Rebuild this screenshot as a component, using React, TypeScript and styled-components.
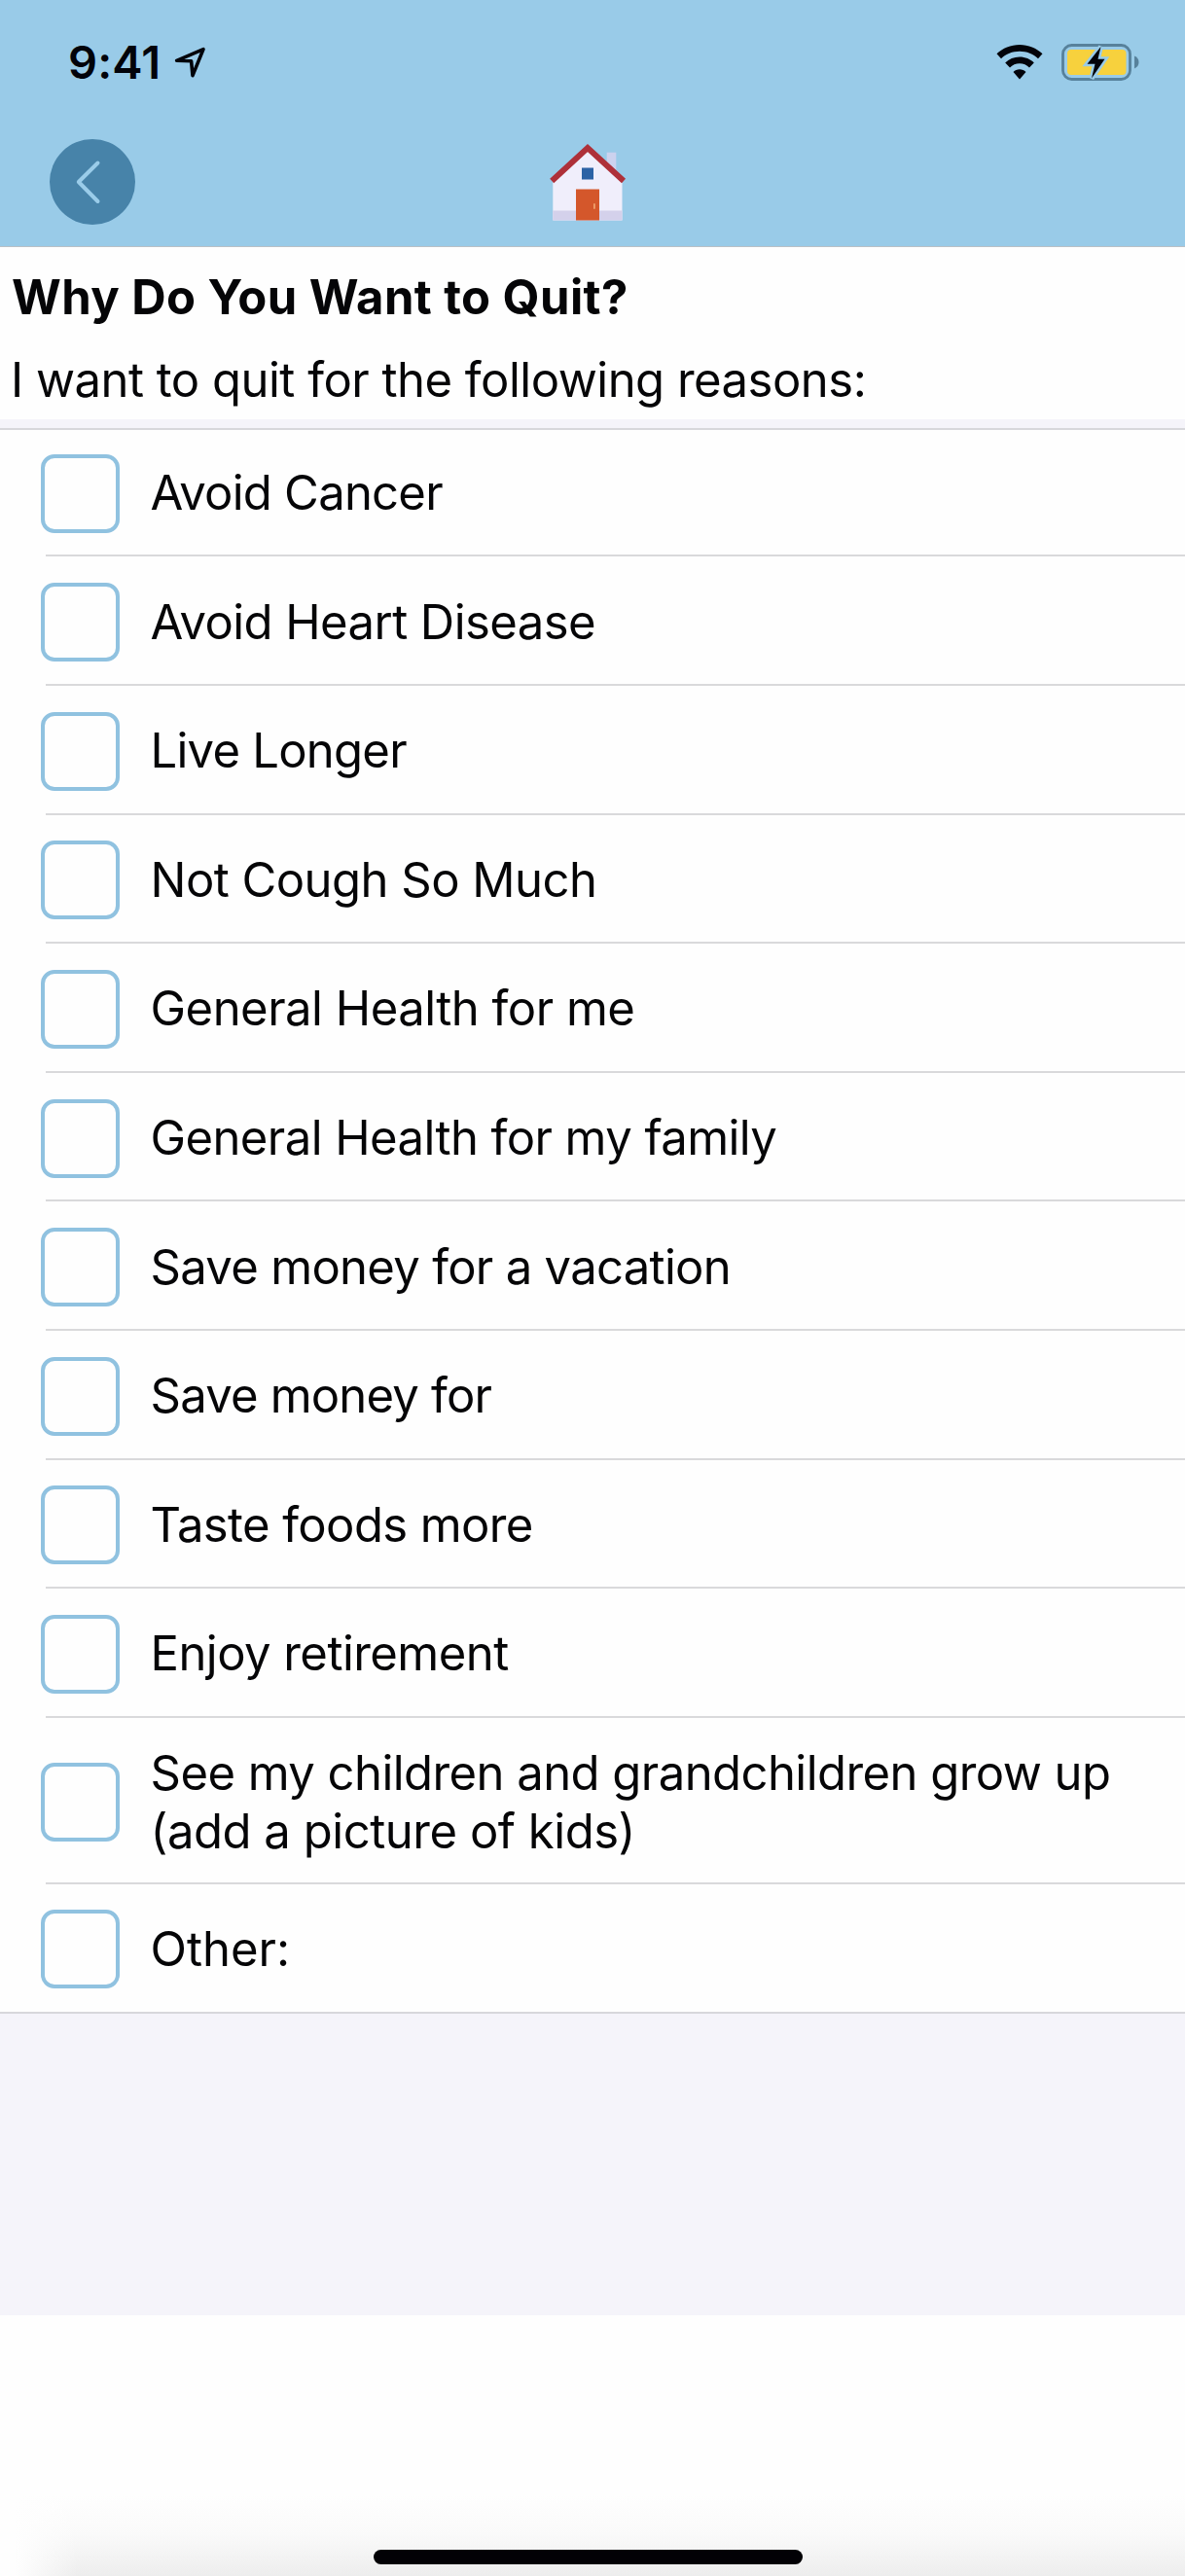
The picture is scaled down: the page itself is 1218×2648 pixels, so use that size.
import React, { useState } from "react";
import styled, { createGlobalStyle } from "styled-components";

const Global = createGlobalStyle`
  *, *::before, *::after { box-sizing: border-box; }
  html, body { margin: 0; padding: 0; background: #fefefe; }
  body { font-family: Inter, "Liberation Sans", sans-serif; color: #050507; }
`;

const Screen = styled.div`
  display: flex;
  flex-direction: column;
  width: 1218px;
  height: 2648px;
  background: #fefefe;
  overflow: hidden;
`;

const Header = styled.header`
  height: 254px;
  flex: none;
  background: #99cbe8;
  border-bottom: 1px solid #b9c0c6;
`;

const StatusBar = styled.div`
  display: flex;
  align-items: center;
  justify-content: space-between;
  height: 127px;
  padding: 0 47px 0 70px;
`;

const StatusGroup = styled.div<{ $gap: number }>`
  display: flex;
  align-items: center;
  gap: ${(p) => p.$gap}px;
`;

const Clock = styled.span`
  font-size: 47px;
  line-height: 56px;
  font-weight: 600;
  letter-spacing: 0.1px;
  color: #02030a;
`;

const NavBar = styled.nav`
  display: grid;
  grid-template-columns: 1fr auto 1fr;
  align-items: center;
  height: 120px;
  padding: 0 59px 0 51px;
`;

const BackButton = styled.button`
  display: flex;
  width: 88px;
  height: 88px;
  padding: 0;
  border: 0;
  border-radius: 50%;
  background: #4783a9;
`;

const HomeButton = styled.button`
  display: flex;
  padding: 0;
  border: 0;
  background: none;
`;

const Intro = styled.section`
  flex: none;
  height: 177px;
  padding: 22px 13px 0 12px;
`;

const Title = styled.h1`
  margin: 0;
  font-size: 49px;
  line-height: 60px;
  font-weight: 700;
  letter-spacing: 0.4px;
  white-space: nowrap;
`;

const Subtitle = styled.p`
  margin: 25px 0 0 -1px;
  font-size: 49px;
  line-height: 60px;
  letter-spacing: -0.5px;
  white-space: nowrap;
`;

const ListArea = styled.main`
  flex: none;
  height: 1949px;
  padding-top: 9px;
  background: #f5f4fa;
`;

const List = styled.ul`
  margin: 0;
  padding: 0;
  list-style: none;
  background: #fefefe;
  border-top: 2px solid #d7d7db;
  border-bottom: 2px solid #d7d7db;
`;

const Row = styled.li<{ $tall?: boolean }>`
  display: flex;
  align-items: center;
  height: ${(p) => (p.$tall ? 171.6 : 132.6)}px;
  padding: 2px 0 0 42px;

  &:first-child { height: 130.4px; padding-top: 0; }
  &:last-child { height: 131px; }
`;

const Divider = styled.li`
  height: 2px;
  margin: -2px 0 0 47px;
  background: #d9d9db;
`;

const Label = styled.label`
  display: flex;
  align-items: center;
  gap: 31.5px;
`;

const Box = styled.input`
  appearance: none;
  flex: none;
  width: 81px;
  height: 81px;
  margin: 0;
  border: 4px solid #90c2e0;
  border-radius: 14px;
  background: #fefefe;

  &:checked { background: #90c2e0; }
`;

const Reason = styled.span`
  display: flex;
  flex-direction: column;
`;

const Line = styled.span<{ $track: number }>`
  font-size: 49px;
  line-height: 60px;
  letter-spacing: ${(p) => p.$track}px;
  white-space: nowrap;
`;

const Footer = styled.footer`
  flex: 1;
  display: flex;
  align-items: flex-end;
  justify-content: center;
  padding: 0 10px 12px 0;
  background:
    linear-gradient(to right, #fefefe 0, #fefefe 15px, rgba(254, 254, 254, 0) 80px),
    linear-gradient(to bottom, #fefefe 0, #fefefe 185px, #fafafa 225px, #ededed 268px);
`;

const HomeIndicator = styled.div`
  width: 441px;
  height: 15px;
  border-radius: 8px;
  background: #020105;
`;

type Item = { lines: [text: string, track: number][] };

const reasons: Item[] = [
  { lines: [["Avoid Cancer", -0.75]] },
  { lines: [["Avoid Heart Disease", -0.56]] },
  { lines: [["Live Longer", -0.75]] },
  { lines: [["Not Cough So Much", -0.53]] },
  { lines: [["General Health for me", -0.5]] },
  { lines: [["General Health for my family", -0.57]] },
  { lines: [["Save money for a vacation", -0.7]] },
  { lines: [["Save money for", -0.8]] },
  { lines: [["Taste foods more", -0.6]] },
  { lines: [["Enjoy retirement", -0.54]] },
  {
    lines: [
      ["See my children and grandchildren grow up", -0.55],
      ["(add a picture of kids)", -0.46],
    ],
  },
  { lines: [["Other:", 0]] },
];

const LocationIcon = () => (
  <svg width="34" height="34" viewBox="0 0 34 34" fill="none">
    <path d="M2.600 15.300 L30 3.600 L19 30.600 L17.600 15.800 Z" stroke="#02030a" strokeWidth="3.600" strokeLinejoin="round" />
  </svg>
);

const WifiIcon = () => (
  <svg width="48" height="36" viewBox="0 0 48 36" fill="#02030a">
    <path d="M24 0C14.900 0 6.600 3.500 .5 9.300L5 14.200C10 9.500 16.600 6.800 24 6.800S38 9.500 43 14.200L47.500 9.300C41.400 3.500 33.100 0 24 0Z" />
    <path d="M24 12.600C18.300 12.600 13 14.800 9.200 18.500L14 23.400C16.600 20.900 20.100 19.300 24 19.300S31.400 20.900 34 23.400L38.800 18.500C35 14.800 29.700 12.600 24 12.600Z" />
    <path d="M24 25.200C21.500 25.200 19.200 26.200 17.500 27.900L24 35.500L30.500 27.900C28.800 26.200 26.500 25.200 24 25.200Z" />
  </svg>
);

const BatteryIcon = () => (
  <svg width="80" height="38" viewBox="0 0 80 38">
    <rect x="1.500" y="1.500" width="69" height="35" rx="9" fill="none" stroke="#57819b" strokeWidth="2.800" />
    <rect x="6" y="6" width="60.500" height="26" rx="4" fill="#f7d13d" />
    <path d="M79.500 19c0 3-1.600 5.300-4.500 6.400V12.600c2.900 1.100 4.500 3.400 4.500 6.400Z" fill="#57819b" />
    <path d="M40.500 3 L26.500 20.800 H34.500 L31 35.500 L44.500 15.800 H37.500 Z" fill="#02030a" stroke="#99cbe8" strokeWidth="5" paintOrder="stroke" />
  </svg>
);

const ChevronIcon = () => (
  <svg width="88" height="88" viewBox="0 0 88 88" fill="none">
    <path d="M49.500 24.500 L29.800 44 L49.500 64" stroke="#9acce9" strokeWidth="4" strokeLinecap="round" strokeLinejoin="round" />
  </svg>
);

const HouseIcon = () => (
  <svg width="80" height="80" viewBox="0 0 80 80">
    <rect x="58.700" y="9.700" width="9.600" height="27" fill="#ccd2ee" />
    <path d="M3.300 38 L39 5 L74.500 38 V79.500 H3.300 Z" fill="#f0eefb" />
    <rect x="3.300" y="69.500" width="71.200" height="10" fill="#d4d1eb" />
    <path d="M2.200 39 L39 5 L76 39" fill="none" stroke="#ae3039" strokeWidth="6" />
    <rect x="33" y="25.500" width="12" height="12" fill="#2c62a5" />
    <rect x="27" y="47.500" width="24" height="32" fill="#d4572b" />
    <rect x="45" y="62" width="1.800" height="6" rx=".9" fill="#f0a06c" />
  </svg>
);

export default function App() {
  const [picked, setPicked] = useState<number[]>([]);
  const toggle = (i: number) =>
    setPicked((now) => (now.includes(i) ? now.filter((n) => n !== i) : [...now, i]));

  return (
    <Screen>
      <Global />
      <Header>
        <StatusBar>
          <StatusGroup $gap={14}>
            <Clock>9:41</Clock>
            <LocationIcon />
          </StatusGroup>
          <StatusGroup $gap={19}>
            <WifiIcon />
            <BatteryIcon />
          </StatusGroup>
        </StatusBar>
        <NavBar>
          <BackButton aria-label="Back"><ChevronIcon /></BackButton>
          <HomeButton aria-label="Home"><HouseIcon /></HomeButton>
        </NavBar>
      </Header>
      <Intro>
        <Title>Why Do You Want to Quit?</Title>
        <Subtitle>I want to quit for the following reasons:</Subtitle>
      </Intro>
      <ListArea>
        <List>
          {reasons.map((item, i) => (
            <React.Fragment key={item.lines[0][0]}>
              <Row $tall={item.lines.length > 1}>
                <Label>
                  <Box type="checkbox" checked={picked.includes(i)} onChange={() => toggle(i)} />
                  <Reason>
                    {item.lines.map(([text, track]) => (
                      <Line key={text} $track={track}>{text}</Line>
                    ))}
                  </Reason>
                </Label>
              </Row>
              {i < reasons.length - 1 && <Divider role="separator" />}
            </React.Fragment>
          ))}
        </List>
      </ListArea>
      <Footer>
        <HomeIndicator />
      </Footer>
    </Screen>
  );
}
